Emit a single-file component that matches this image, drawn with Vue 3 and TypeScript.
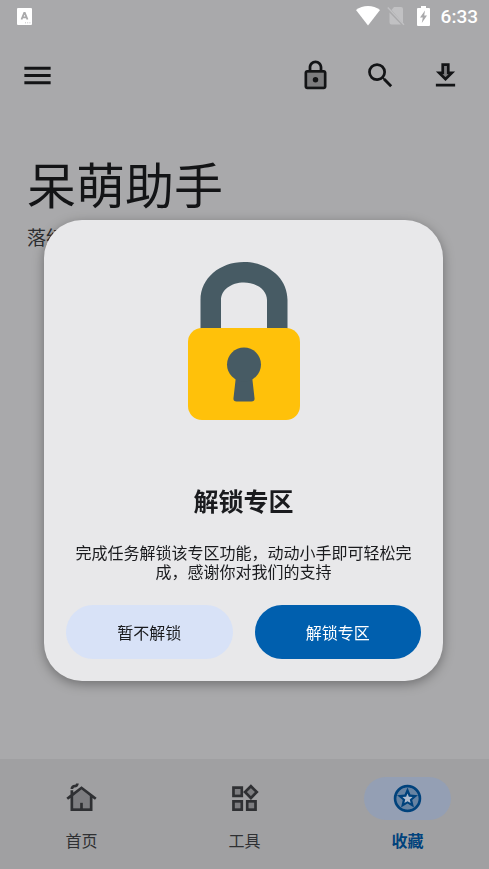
<script setup lang="ts">
import { ref } from 'vue'

interface Tab {
  id: string
  label: string
}

const tabs: Tab[] = [
  { id: 'home', label: '首页' },
  { id: 'tools', label: '工具' },
  { id: 'favorites', label: '收藏' },
]

const active = ref('favorites')
const dialogOpen = ref(true)
</script>

<template>
  <div class="screen">
    <div class="status">
      <svg class="ime" viewBox="0 0 15 17" aria-hidden="true">
        <rect width="15" height="17" rx="1" fill="#fff" />
        <path d="M4.500 11.500 7.200 4.800h.6l2.700 6.700M5.400 9.400h4.200" fill="none" stroke="#a9a9ab" stroke-width="1.800" />
        <path d="M8 14.800h1M10.200 14.800h1M12.400 14.800h1" stroke="#c4c4c6" stroke-width="1" />
      </svg>
      <div class="status-right">
        <svg class="wifi" viewBox="0 0 24 20" aria-hidden="true">
          <path d="M0 4C3.400 1.400 7.600 0 12 0s8.600 1.400 12 4L12 19.500z" fill="#fff" />
        </svg>
        <svg class="sim" viewBox="0 0 18 20" aria-hidden="true">
          <path d="M7 1h7q2 0 2 2v14L4.500 4zM2.500 6.500 14 18.500H4.500q-2 0-2-2z" fill="#c1c1c3" />
          <path d="M.8 1.500 17 18.800" stroke="#c1c1c3" stroke-width="1.300" />
        </svg>
        <svg class="battery" viewBox="0 0 13 20" aria-hidden="true">
          <path d="M4 0h5v2h3q1 0 1 1v16q0 1-1 1H1q-1 0-1-1V3q0-1 1-1h3z" fill="#fff" />
          <path d="M8 4.500 3 11.500h2.800L4.800 17 10 9.500H7.200z" fill="#a9a9ab" />
        </svg>
        <span class="time">6:33</span>
      </div>
    </div>

    <header class="bar">
      <button type="button" class="icon-btn menu" aria-label="菜单">
        <svg viewBox="0 0 24 24"><path d="M3 18h18v-2H3zm0-5h18v-2H3zm0-7v2h18V6z" /></svg>
      </button>
      <div class="actions">
        <button type="button" class="icon-btn" aria-label="解锁">
          <svg viewBox="0 0 24 24">
            <path d="M6 20h12V10H6z" opacity=".3" />
            <path d="M18 8h-1V6c0-2.760-2.240-5-5-5S7 3.240 7 6v2H6c-1.100 0-2 .9-2 2v10c0 1.100.9 2 2 2h12c1.100 0 2-.9 2-2V10c0-1.100-.9-2-2-2zM9 6c0-1.660 1.340-3 3-3s3 1.340 3 3v2H9zm9 14H6V10h12z" />
            <circle cx="12" cy="15" r="2" />
          </svg>
        </button>
        <button type="button" class="icon-btn" aria-label="搜索">
          <svg viewBox="0 0 24 24"><path d="M15.500 14h-.79l-.28-.27A6.470 6.470 0 0 0 16 9.500 6.500 6.500 0 1 0 9.500 16c1.610 0 3.090-.59 4.230-1.570l.27.28v.79l5 4.990L20.490 19zm-6 0C7.010 14 5 11.990 5 9.500S7.010 5 9.500 5 14 7.010 14 9.500 11.990 14 9.500 14z" /></svg>
        </button>
        <button type="button" class="icon-btn" aria-label="下载">
          <svg viewBox="0 0 24 24">
            <path d="M9.830 11H11V5h2v6h1.170L12 13.170z" opacity=".3" />
            <path d="M19 9h-4V3H9v6H5l7 7zm-8 2V5h2v6h1.170L12 13.170 9.830 11zm-6 7h14v2H5z" />
          </svg>
        </button>
      </div>
    </header>

    <main class="content">
      <h1>呆萌助手</h1>
      <p>落红</p>
    </main>

    <nav class="tabs">
      <button
        v-for="tab in tabs"
        :key="tab.id"
        type="button"
        class="tab"
        :class="{ active: active === tab.id }"
        @click="active = tab.id"
      >
        <span class="pill">
          <svg v-if="tab.id === 'home'" viewBox="0 0 24 24" aria-hidden="true">
            <path d="M18 19h-5v-4h-2v4H6v-8.900l6-4.580 6 4.580z" opacity=".3" />
            <path d="M12 3 6 7.580V6H4v3.110L1 11.400l1.210 1.590L4 11.620V21h16v-9.380l1.790 1.360L23 11.400zm6 16h-5v-4h-2v4H6v-8.900l6-4.580 6 4.580zM10 1c0 1.660-1.340 3-3 3-.55 0-1 .45-1 1H4c0-1.660 1.340-3 3-3 .55 0 1-.45 1-1z" />
          </svg>
          <svg v-else-if="tab.id === 'tools'" viewBox="0 0 24 24" aria-hidden="true">
            <path d="M5 5h4v4H5zm10 10h4v4h-4zM5 15h4v4H5zM16.660 4.520l-2.830 2.820 2.830 2.830 2.830-2.830z" opacity=".3" />
            <path d="M16.660 4.520l2.830 2.830-2.830 2.830-2.830-2.830 2.830-2.830M9 5v4H5V5h4m10 10v4h-4v-4h4M9 15v4H5v-4h4m7.660-13.310L11 7.340 16.660 13l5.660-5.660zM11 3H3v8h8zm10 10h-8v8h8zm-10 0H3v8h8z" />
          </svg>
          <svg v-else viewBox="0 0 24 24" aria-hidden="true">
            <circle cx="12" cy="12" r="8" opacity=".3" />
            <circle cx="12" cy="12" r="9" fill="none" stroke="currentColor" stroke-width="2" />
            <path d="M16.700 18.500 12 15.600l-4.700 2.900 1.250-5.350-4.150-3.600 5.470-.46L12 4l2.130 5.090 5.470.46-4.150 3.600z" />
            <path class="star" d="m12 8.300 1 2.450 2.700.2-2.050 1.800.62 2.600L12 13.970l-2.270 1.380.62-2.600-2.050-1.800 2.700-.2z" />
          </svg>
        </span>
        <span class="label">{{ tab.label }}</span>
      </button>
    </nav>

    <div v-if="dialogOpen" class="overlay">
      <section class="dialog" role="dialog" aria-modal="true" aria-labelledby="unlock-title">
        <svg class="padlock" viewBox="0 0 114 160" aria-hidden="true">
          <path d="M13.500 68V39C13.500 17 33 1 57 1s43.500 16 43.500 38v29H80V39C80 29 70 21.500 57 21.500S34 29 34 39v29z" fill="#475b64" />
          <rect x="1" y="67" width="112" height="92" rx="14" fill="#ffc10a" />
          <path d="M49 115h16l2.500 22q.5 3.500-3 3.500h-15q-3.500 0-3-3.500z" fill="#475b64" />
          <circle cx="57" cy="103.500" r="17" fill="#475b64" />
        </svg>
        <h2 id="unlock-title">解锁专区</h2>
        <p>完成任务解锁该专区功能，动动小手即可轻松完成，感谢你对我们的支持</p>
        <div class="buttons">
          <button type="button" class="secondary" @click="dialogOpen = false">暂不解锁</button>
          <button type="button" class="primary">解锁专区</button>
        </div>
      </section>
    </div>
  </div>
</template>

<style>
body {
  margin: 0;
  background: #a9a9ab;
}
</style>

<style scoped>
.screen {
  display: flex;
  flex-direction: column;
  min-height: 100vh;
  background: #a9a9ab;
  color: #131416;
  font-family: Roboto, "Noto Sans CJK SC", sans-serif;
}

svg {
  display: block;
  fill: currentColor;
}

button {
  margin: 0;
  padding: 0;
  border: 0;
  background: none;
  color: inherit;
  font-family: inherit;
  cursor: pointer;
}

h1,
h2,
p {
  margin: 0;
}

.status {
  display: flex;
  align-items: center;
  justify-content: space-between;
  height: 32px;
  padding: 0 11px 0 17px;
}

.ime {
  width: 15px;
  height: 17px;
}

.status-right {
  display: flex;
  align-items: center;
  color: #fff;
}

.wifi {
  width: 24px;
  height: 20px;
}

.sim {
  width: 18px;
  height: 20px;
  margin-left: 7px;
}

.battery {
  width: 13px;
  height: 20px;
  margin-left: 12px;
}

.time {
  margin-left: 11px;
  padding-top: 2px;
  font-size: 19px;
  font-weight: 500;
  line-height: 32px;
}

.bar {
  display: flex;
  align-items: center;
  justify-content: space-between;
  height: 87px;
  padding: 0 11px 0 5px;
}

.actions {
  display: flex;
}

.icon-btn {
  display: grid;
  place-items: center;
  width: 65px;
  height: 65px;
}

.icon-btn svg {
  width: 33px;
  height: 33px;
}

.menu svg {
  width: 35px;
  height: 35px;
}

.content {
  flex: 1;
  padding: 34px 27px;
}

h1 {
  font-size: 49px;
  font-weight: 400;
  line-height: 70px;
}

.content p {
  margin-top: 1px;
  color: #2c2d30;
  font-size: 19px;
  line-height: 30px;
}

.tabs {
  display: grid;
  grid-template-columns: repeat(3, 1fr);
  height: 110px;
  background: #a0a0a2;
}

.tab {
  display: flex;
  flex-direction: column;
  align-items: center;
  gap: 10px;
  padding-top: 18px;
  color: #2f3033;
}

.pill {
  display: grid;
  place-items: center;
  width: 87px;
  height: 43px;
  border-radius: 22px;
}

.pill svg {
  width: 33px;
  height: 33px;
}

.label {
  font-size: 16px;
  font-weight: 400;
  line-height: 24px;
}

.active {
  color: #00427c;
}

.active .pill {
  background: #949fb4;
}

.active .label {
  font-weight: 700;
}

.star {
  fill: #b0bccf;
}

.overlay {
  position: fixed;
  inset: 0;
  display: flex;
  align-items: center;
  justify-content: center;
  padding: 32px 46px 0 44px;
}

.dialog {
  display: flex;
  flex: 1;
  flex-direction: column;
  align-items: center;
  padding: 41px 22px 22px;
  border-radius: 38px;
  background: #e8e8ea;
  color: #1a1b1e;
  box-shadow: 0 3px 12px rgba(0, 0, 0, 0.35);
}

.padlock {
  width: 114px;
  height: 160px;
}

h2 {
  margin-top: 64px;
  font-size: 25px;
  font-weight: 700;
  line-height: 36px;
}

.dialog p {
  margin-top: 23px;
  padding: 0 6px;
  font-size: 16px;
  line-height: 19px;
  text-align: center;
}

.buttons {
  display: grid;
  grid-template-columns: 1fr 1fr;
  gap: 22px;
  align-self: stretch;
  margin-top: 23px;
}

.buttons button {
  height: 54px;
  border-radius: 27px;
  font-size: 16px;
}

.secondary {
  background: #d8e2f7;
}

.buttons .primary {
  background: #005fae;
  color: #fff;
}
</style>
